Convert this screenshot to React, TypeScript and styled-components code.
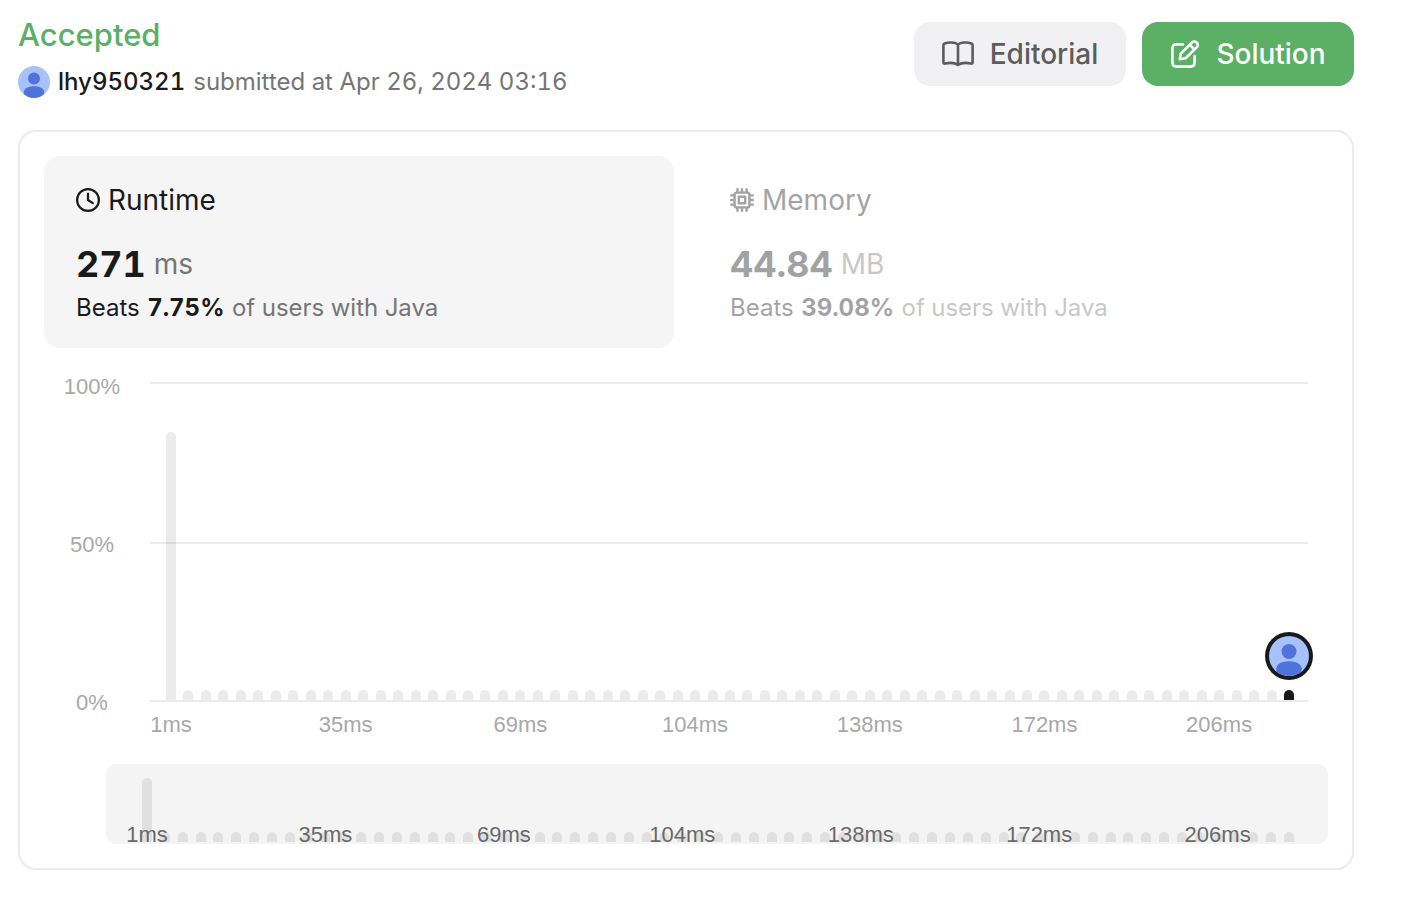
import React from "react";
import styled, { createGlobalStyle, css } from "styled-components";

const GlobalStyle = createGlobalStyle`
  *, *::before, *::after { box-sizing: border-box; }
  body {
    margin: 0;
    background: #ffffff;
    color: #1a1a1a;
    font-family: Inter, "Liberation Sans", sans-serif;
    font-variant-numeric: tabular-nums;
  }
  button { font: inherit; font-variant-numeric: inherit; border: 0; cursor: pointer; }
`;

const Page = styled.main`
  padding: 14px 50px 30px 18px;
`;

const Header = styled.header`
  display: flex;
  justify-content: space-between;
  align-items: flex-start;
  padding-bottom: 32px;
`;

const Status = styled.h1`
  margin: 0;
  font-size: 31px;
  line-height: 42px;
  font-weight: 500;
  color: #5bb066;
`;

const Byline = styled.p`
  display: flex;
  align-items: center;
  gap: 8px;
  margin: 10px 0 0;
  font-size: 24px;
  line-height: 32px;
  color: #757575;
`;

const UserLink = styled.a`
  display: flex;
  align-items: center;
  gap: 8px;
  font-weight: 500;
  color: #1a1a1a;
  text-decoration: none;
`;

const AvatarSvg = styled.svg<{ $size: number }>`
  display: block;
  flex: none;
  width: ${(p) => p.$size}px;
  height: ${(p) => p.$size}px;
  border-radius: 50%;
`;

const Actions = styled.div`
  display: flex;
  gap: 16px;
  padding-top: 8px;
`;

const ActionButton = styled.button<{ $primary?: boolean }>`
  display: flex;
  align-items: center;
  justify-content: center;
  gap: 16px;
  width: 212px;
  height: 64px;
  padding: 0;
  border-radius: 16px;
  font-size: 28px;
  line-height: 36px;
  font-weight: 500;
  color: ${(p) => (p.$primary ? "#ffffff" : "#5c5c5c")};
  background: ${(p) => (p.$primary ? "#5bb066" : "#f1f1f3")};
`;

const Icon = styled.svg<{ $w: number; $h: number }>`
  display: block;
  flex: none;
  width: ${(p) => p.$w}px;
  height: ${(p) => p.$h}px;
  fill: none;
  stroke: currentColor;
  stroke-linecap: round;
  stroke-linejoin: round;
`;

const Card = styled.section`
  padding: 24px;
  border: 2px solid #ebebeb;
  border-radius: 18px;
`;

const Metrics = styled.div`
  display: grid;
  grid-template-columns: 1fr 1fr;
  gap: 24px;
`;

const Metric = styled.button<{ $active?: boolean }>`
  display: block;
  padding: 24px 32px;
  border-radius: 16px;
  text-align: left;
  color: #1a1a1a;
  background: transparent;
  ${(p) =>
    p.$active
      ? css`
          background: #f5f5f5;
        `
      : css`
          & > * { opacity: 0.4; }
        `}
`;

const MetricTitle = styled.span`
  display: flex;
  align-items: center;
  gap: 8px;
  font-size: 28px;
  line-height: 40px;
`;

const MetricValue = styled.span`
  display: flex;
  align-items: center;
  gap: 8px;
  margin-top: 24px;
  font-size: 36px;
  line-height: 40px;
  font-weight: 700;
`;

const Unit = styled.span`
  font-size: 28px;
  font-weight: 400;
  color: #757575;
`;

const MetricNote = styled.span`
  display: block;
  margin-top: 8px;
  font-size: 24px;
  line-height: 32px;
`;

const Percent = styled.strong`
  margin: 0 1px;
  font-weight: 700;
`;

const Muted = styled.span`
  color: #757575;
`;

const Chart = styled.figure`
  display: grid;
  grid-template-columns: 96px 1fr;
  column-gap: 10px;
  margin: 34px 20px 0 0;
  font-family: "Liberation Sans", Arial, sans-serif;
  font-size: 22px;
  line-height: 24px;
  color: #a8a8a8;
`;

const YAxis = styled.div`
  display: flex;
  flex-direction: column;
  justify-content: space-between;
  align-items: center;
  height: 340px;
  margin: -7px 0;
`;

const Plot = styled.div`
  display: grid;
  grid-template-columns: minmax(0, 1fr);
  align-content: start;
`;

const GridLines = styled.div`
  grid-area: 1 / 1;
  display: grid;
  grid-template-rows: 160px 158px 2px;
  align-content: start;
`;

const GridLine = styled.div`
  border-top: 2px solid #ebebeb;
`;

const Bars = styled.div`
  grid-area: 1 / 1;
  display: flex;
  justify-content: space-between;
  padding: 0 14px 0 16px;
`;

const Column = styled.div<{ $h: number }>`
  position: relative;
  display: flex;
  flex-direction: column;
  justify-content: flex-end;
  align-items: center;
  width: 10px;
  height: ${(p) => p.$h}px;
`;

const Bar = styled.div<{ $user?: boolean }>`
  width: 10px;
  border-radius: 5px 5px 0 0;
  background: ${(p) => (p.$user ? "#1a1a1a" : "rgba(0, 0, 0, 0.08)")};
`;

const Tick = styled.span<{ $inset?: boolean }>`
  position: absolute;
  z-index: 1;
  top: 100%;
  left: 50%;
  margin-top: ${(p) => (p.$inset ? -19 : 13)}px;
  transform: translateX(-50%);
  white-space: nowrap;
  color: ${(p) => (p.$inset ? "#6a6a6a" : "inherit")};
`;

const UserMarker = styled.span`
  position: absolute;
  bottom: 20px;
  left: 50%;
  transform: translateX(-50%);
  padding: 4px;
  border-radius: 50%;
  background: #1a1a1a;
`;

const Overview = styled.div`
  display: flex;
  justify-content: space-between;
  align-items: flex-end;
  height: 80px;
  margin: 56px 0 0 62px;
  padding: 0 34px 2px 36px;
  border-radius: 10px;
  background: #f4f4f4;
  font-family: "Liberation Sans", Arial, sans-serif;
  font-size: 22px;
  line-height: 24px;
`;

const ticks: Record<number, string> = {
  0: "1ms",
  10: "35ms",
  20: "69ms",
  30: "104ms",
  40: "138ms",
  50: "172ms",
  60: "206ms",
};

const buckets = Array.from({ length: 65 }, (_, i) => ({
  share: i === 0 ? 84.3 : 3.2,
  user: i === 64,
  tick: ticks[i],
}));

function Avatar({ size }: { size: number }) {
  return (
    <AvatarSvg $size={size} viewBox="0 0 32 32" aria-hidden="true">
      <rect width="32" height="32" fill="#a6c1fb" />
      <circle cx="16" cy="12.4" r="6" fill="#4e74d9" />
      <path d="M5.8 26.2c0-3.6 4.2-6 10.2-6s10.2 2.4 10.2 6c0 3.5-3.4 5.8-10.2 5.8S5.8 29.7 5.8 26.2Z" fill="#4e74d9" />
    </AvatarSvg>
  );
}

function BookIcon() {
  return (
    <Icon $w={32} $h={26} viewBox="0 0 32 26" strokeWidth="2.6" aria-hidden="true">
      <path d="M16 3.6C13.6 1.2 7.2 1 2.6 2.4Q1.4 2.8 1.4 4V21.4Q1.4 23 3 22.6C7 21.6 12.6 21.6 16 24C19.4 21.6 25 21.6 29 22.6Q30.6 23 30.6 21.4V4Q30.6 2.8 29.4 2.4C24.8 1 18.4 1.2 16 3.6ZM16 3.6V24" />
    </Icon>
  );
}

function EditIcon() {
  return (
    <Icon $w={30} $h={28} viewBox="-1 0 30 28" strokeWidth="2.6" aria-hidden="true">
      <path d="M12 4.4H5.4Q1.4 4.4 1.4 8.4V22.6Q1.4 26.6 5.4 26.6H19.6Q23.6 26.6 23.6 22.6V16" />
      <path d="M8.8 19.2L9.8 13.6L20.8 2.6Q23.4.4 25.8 2.6Q27.8 5 25.6 7.4L14.6 18.2ZM18.8 4.8L23.4 9.4" />
    </Icon>
  );
}

function ClockIcon() {
  return (
    <Icon $w={24} $h={24} viewBox="0 0 24 24" strokeWidth="2.2" aria-hidden="true">
      <circle cx="12" cy="12" r="10.9" />
      <path d="M12 5.6V12L16.8 15.2" />
    </Icon>
  );
}

function ChipIcon() {
  return (
    <Icon $w={24} $h={24} viewBox="0 0 24 24" strokeWidth="2.4" aria-hidden="true">
      <rect x="4.6" y="4.6" width="14.8" height="14.8" rx="2" />
      <rect x="8.8" y="8.8" width="6.4" height="6.4" />
      <path d="M7.4 1.2V4M12 1.2V4M16.6 1.2V4M7.4 20V22.8M12 20V22.8M16.6 20V22.8M1.2 7.4H4M1.2 12H4M1.2 16.6H4M20 7.4H22.8M20 12H22.8M20 16.6H22.8" />
    </Icon>
  );
}

export default function App() {
  return (
    <>
      <GlobalStyle />
      <Page>
        <Header>
          <div>
            <Status>Accepted</Status>
            <Byline>
              <UserLink href="#user">
                <Avatar size={32} />
                lhy950321
              </UserLink>
              <span>submitted at Apr 26, 2024 03:16</span>
            </Byline>
          </div>
          <Actions>
            <ActionButton type="button">
              <BookIcon />
              Editorial
            </ActionButton>
            <ActionButton type="button" $primary>
              <EditIcon />
              Solution
            </ActionButton>
          </Actions>
        </Header>
        <Card>
          <Metrics>
            <Metric type="button" $active aria-pressed="true">
              <MetricTitle>
                <ClockIcon />
                Runtime
              </MetricTitle>
              <MetricValue>
                271 <Unit>ms</Unit>
              </MetricValue>
              <MetricNote>
                Beats <Percent>7.75%</Percent> <Muted>of users with Java</Muted>
              </MetricNote>
            </Metric>
            <Metric type="button" aria-pressed="false">
              <MetricTitle>
                <ChipIcon />
                Memory
              </MetricTitle>
              <MetricValue>
                44.84 <Unit>MB</Unit>
              </MetricValue>
              <MetricNote>
                Beats <Percent>39.08%</Percent> <Muted>of users with Java</Muted>
              </MetricNote>
            </Metric>
          </Metrics>
          <Chart>
            <YAxis>
              <span>100%</span>
              <span>50%</span>
              <span>0%</span>
            </YAxis>
            <Plot>
              <GridLines>
                <GridLine />
                <GridLine />
                <GridLine />
              </GridLines>
              <Bars>
                {buckets.map((b, i) => (
                  <Column key={i} $h={318}>
                    {b.user && (
                      <UserMarker>
                        <Avatar size={40} />
                      </UserMarker>
                    )}
                    <Bar $user={b.user} style={{ height: `${b.share}%` }} />
                    {b.tick && <Tick>{b.tick}</Tick>}
                  </Column>
                ))}
              </Bars>
            </Plot>
          </Chart>
          <Overview>
            {buckets.map((b, i) => (
              <Column key={i} $h={64}>
                <Bar style={{ height: b.share > 50 ? "100%" : 10 }} />
                {b.tick && <Tick $inset>{b.tick}</Tick>}
              </Column>
            ))}
          </Overview>
        </Card>
      </Page>
    </>
  );
}
